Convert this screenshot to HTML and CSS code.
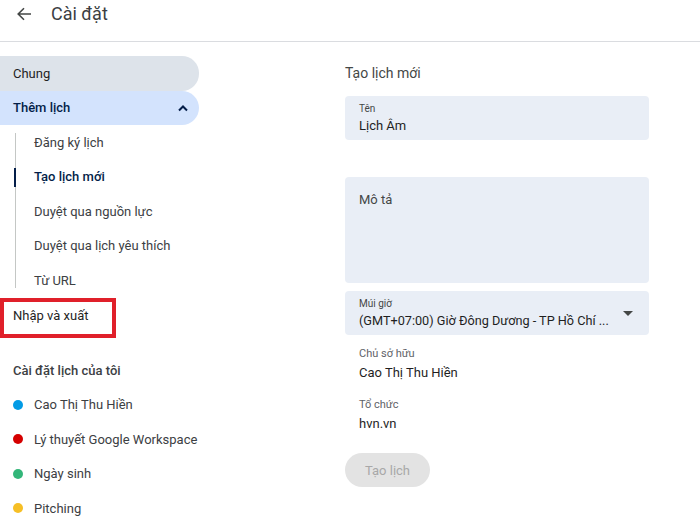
FILE: index.html
```html
<!DOCTYPE html>
<html lang="vi">
<head>
<meta charset="utf-8">
<link rel="stylesheet" href="styles.css">
</head>
<body>
<header class="topbar">
  <svg class="back" width="16" height="16" viewBox="0 0 16 16"><path d="M15 8H2.5M8 2.2L2.2 8 8 13.8" fill="none" stroke="#444746" stroke-width="1.6"/></svg>
  <h1 class="title">Cài đặt</h1>
</header>
<main class="layout">
  <nav class="sidebar">
    <div class="pill pill-gray">Chung</div>
    <div class="pill pill-blue">Thêm lịch
      <svg class="chev" width="12" height="8" viewBox="0 0 12 8"><path d="M2 6.5L6 2.5l4 4" fill="none" stroke="#041e49" stroke-width="2"/></svg>
    </div>
    <ul class="sublist">
      <li class="subitem">Đăng ký lịch</li>
      <li class="subitem active">Tạo lịch mới</li>
      <li class="subitem">Duyệt qua nguồn lực</li>
      <li class="subitem">Duyệt qua lịch yêu thích</li>
      <li class="subitem">Từ URL</li>
    </ul>
    <div class="navitem marked">Nhập và xuất<span class="redbox"></span></div>
    <div class="section-title">Cài đặt lịch của tôi</div>
    <ul class="callist">
      <li class="cal"><span class="dot dot-blue"></span>Cao Thị Thu Hiền</li>
      <li class="cal"><span class="dot dot-red"></span>Lý thuyết Google Workspace</li>
      <li class="cal"><span class="dot dot-green"></span>Ngày sinh</li>
      <li class="cal"><span class="dot dot-yellow"></span>Pitching</li>
    </ul>
  </nav>
  <section class="content">
    <h2 class="heading">Tạo lịch mới</h2>
    <div class="field">
      <div class="flabel">Tên</div>
      <div class="fvalue">Lịch Âm</div>
    </div>
    <div class="field desc">
      <div class="desc-label">Mô tả</div>
    </div>
    <div class="field tz">
      <div class="tz-text">
        <div class="flabel">Múi giờ</div>
        <div class="fvalue tz-value">(GMT+07:00) Giờ Đông Dương - TP Hồ Chí ...</div>
      </div>
      <svg class="caret" width="10" height="5" viewBox="0 0 10 5"><path d="M0 0h10L5 5z" fill="#444746"/></svg>
    </div>
    <div class="info">
      <div class="ilabel">Chủ sở hữu</div>
      <div class="ivalue">Cao Thị Thu Hiền</div>
    </div>
    <div class="info">
      <div class="ilabel">Tổ chức</div>
      <div class="ivalue">hvn.vn</div>
    </div>
    <button class="btn" disabled>Tạo lịch</button>
  </section>
</main>
</body>
</html>
```
FILE: styles.css
```css
* { box-sizing: border-box; }
html, body { margin: 0; padding: 0; background: #fff; }
body {
  font-family: Roboto, "Noto Sans", "Liberation Sans", sans-serif;
  color: #1f1f1f;
  width: 700px;
  height: 530px;
  overflow: hidden;
}
.topbar {
  height: 42px;
  border-bottom: 1px solid #dadce0;
  display: flex;
  align-items: flex-start;
  padding: 0 0 14px 16px;
}
.back { margin-top: 6px; flex: none; }
.title {
  margin: 0 0 0 19px;
  font-size: 18px;
  font-weight: 400;
  line-height: 28px;
  color: #3c4043;
}
.layout {
  display: grid;
  grid-template-columns: 199px 304px;
  column-gap: 146px;
  padding-top: 14px;
}
.sidebar { display: flex; flex-direction: column; }
.pill {
  height: 34.5px;
  display: flex;
  align-items: center;
  padding-left: 13px;
  font-size: 13px;
  border-radius: 0 17px 17px 0;
}
.pill-gray { background: #dde3ea; color: #1f1f1f; }
.pill-blue {
  background: #d3e3fd;
  color: #041e49;
  font-weight: 500;
  justify-content: space-between;
  padding-right: 10px;
}
.chev { flex: none; }
.sublist {
  list-style: none;
  margin: 0;
  padding: 0;
  position: relative;
}
.sublist::before {
  content: "";
  position: absolute;
  left: 15px;
  top: 8px;
  bottom: 10px;
  width: 1px;
  background: #c4c7c5;
}
.subitem {
  height: 34.5px;
  display: flex;
  align-items: center;
  padding-left: 34px;
  font-size: 13px;
  color: #3c4043;
  position: relative;
}
.subitem.active { color: #041e49; font-weight: 500; }
.subitem.active::before {
  content: "";
  position: absolute;
  left: 14px;
  top: 8px;
  bottom: 7px;
  width: 2px;
  background: #041e49;
}
.navitem {
  height: 35px;
  display: flex;
  align-items: center;
  padding-left: 13px;
  font-size: 13px;
  color: #1f1f1f;
}
.marked { position: relative; }
.redbox {
  position: absolute;
  left: 0;
  top: 0;
  width: 116px;
  height: 40px;
  border: 4px solid #e0202a;
}
.section-title {
  margin-top: 21px;
  height: 34px;
  display: flex;
  align-items: center;
  padding-left: 13px;
  font-size: 13px;
  font-weight: 500;
  color: #3c4043;
}
.callist { list-style: none; margin: 0; padding: 0; }
.cal {
  height: 34.5px;
  display: flex;
  align-items: center;
  font-size: 13px;
  color: #3c4043;
  padding-left: 13px;
}
.dot {
  width: 10px;
  height: 10px;
  border-radius: 50%;
  margin-right: 11px;
  flex: none;
}
.dot-blue { background: #039be5; }
.dot-red { background: #d50000; }
.dot-green { background: #33b679; }
.dot-yellow { background: #f6bf26; }
.content { display: flex; flex-direction: column; align-items: flex-start; }
.heading {
  margin: 0;
  height: 34px;
  display: flex;
  align-items: center;
  font-size: 14px;
  font-weight: 400;
  color: #444746;
}
.field {
  margin-top: 6px;
  width: 304px;
  height: 44px;
  background: #e9eef6;
  border-radius: 4px;
  padding: 7px 14px 0;
}
.flabel { font-size: 10px; line-height: 12px; color: #444746; }
.fvalue { font-size: 13px; line-height: 17px; margin-top: 2px; color: #1f1f1f; white-space: nowrap; }
.tz-value { font-size: 12.7px; }
.field.desc {
  margin-top: 37px;
  height: 106px;
  padding-top: 14px;
}
.desc-label { font-size: 13px; line-height: 17px; color: #444746; }
.field.tz {
  margin-top: 8px;
  display: flex;
  justify-content: space-between;
  padding-right: 16px;
}
.caret { margin-top: 13px; flex: none; }
.info { padding-left: 14px; margin-top: 12px; }
.info + .info { margin-top: 16px; }
.ilabel { font-size: 11px; line-height: 14px; color: #5f6368; }
.ivalue { font-size: 13px; line-height: 18px; margin-top: 3px; color: #1f1f1f; }
.btn {
  margin-top: 20px;
  width: 85px;
  height: 34px;
  border: none;
  border-radius: 17px;
  background: #e3e3e3;
  color: #a8a8a8;
  font-family: inherit;
  font-size: 13px;
  font-weight: 400;
  padding: 0;
}
```
